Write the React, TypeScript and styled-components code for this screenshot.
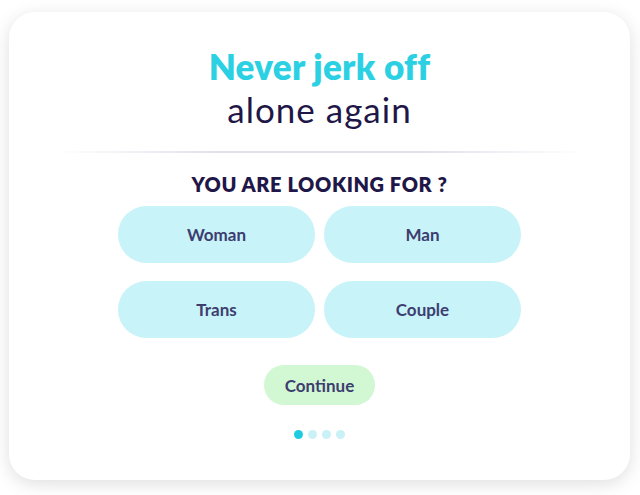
import React from "react";
import styled, { createGlobalStyle } from "styled-components";

const Global = createGlobalStyle`
  html, body { margin: 0; padding: 0; background: #ffffff; }
  body { font-family: Lato, "Open Sans", sans-serif; }
  * { box-sizing: border-box; }
`;

const Page = styled.div`
  width: 640px;
  height: 495px;
  padding: 12px 10px 15px 9px;
  display: flex;
`;

const Card = styled.div`
  flex: 1;
  background: #fff;
  border-radius: 26px;
  box-shadow: 0 4px 18px rgba(0, 0, 0, 0.13);
  display: flex;
  flex-direction: column;
  align-items: center;
  padding-top: 34px;
`;

const Title = styled.h1`
  margin: 0;
  font-family: Lato, sans-serif;
  font-weight: 800;
  font-size: 35px;
  line-height: 40px;
  letter-spacing: 0.3px;
  color: #2bd1e3;
  text-align: center;
`;

const Subtitle = styled.div`
  font-family: Lato, sans-serif;
  font-weight: 400;
  font-size: 35px;
  line-height: 40px;
  letter-spacing: 1px;
  color: #1f1747;
  margin-top: 3px;
`;

const Divider = styled.div`
  width: 530px;
  height: 2px;
  margin-top: 22px;
  background: linear-gradient(
    90deg,
    rgba(225, 225, 235, 0) 0%,
    rgba(225, 225, 235, 1) 30%,
    rgba(225, 225, 235, 1) 70%,
    rgba(225, 225, 235, 0) 100%
  );
`;

const Question = styled.h2`
  margin: 20px 0 0;
  font-family: Lato, sans-serif;
  font-weight: 800;
  font-size: 20px;
  line-height: 22px;
  letter-spacing: 0.6px;
  color: #1f1747;
`;

const Options = styled.div`
  display: grid;
  grid-template-columns: 197px 197px;
  column-gap: 9px;
  row-gap: 18px;
  margin-top: 11px;
`;

const Option = styled.button`
  height: 57px;
  border: none;
  border-radius: 29px;
  background: #c8f3f9;
  color: #3d3d6f;
  font-family: Lato, sans-serif;
  font-weight: 700;
  font-size: 17px;
  cursor: pointer;
`;

const ContinueButton = styled.button`
  margin-top: 27px;
  width: 111px;
  height: 40px;
  border: none;
  border-radius: 20px;
  background: #d2f8d3;
  color: #3d3d6f;
  font-family: Lato, sans-serif;
  font-weight: 700;
  font-size: 17px;
  cursor: pointer;
`;

const Dots = styled.div`
  display: flex;
  gap: 5px;
  margin-top: 25px;
`;

const Dot = styled.span<{ $active?: boolean }>`
  width: 9px;
  height: 9px;
  border-radius: 50%;
  background: ${(p) => (p.$active ? "#1fcbe0" : "#c9f1f7")};
`;

export default function App() {
  return (
    <>
      <Global />
      <Page>
        <Card>
          <Title>Never jerk off</Title>
          <Subtitle>alone again</Subtitle>
          <Divider />
          <Question>YOU ARE LOOKING FOR ?</Question>
          <Options>
            <Option>Woman</Option>
            <Option>Man</Option>
            <Option>Trans</Option>
            <Option>Couple</Option>
          </Options>
          <ContinueButton>Continue</ContinueButton>
          <Dots>
            <Dot $active />
            <Dot />
            <Dot />
            <Dot />
          </Dots>
        </Card>
      </Page>
    </>
  );
}
